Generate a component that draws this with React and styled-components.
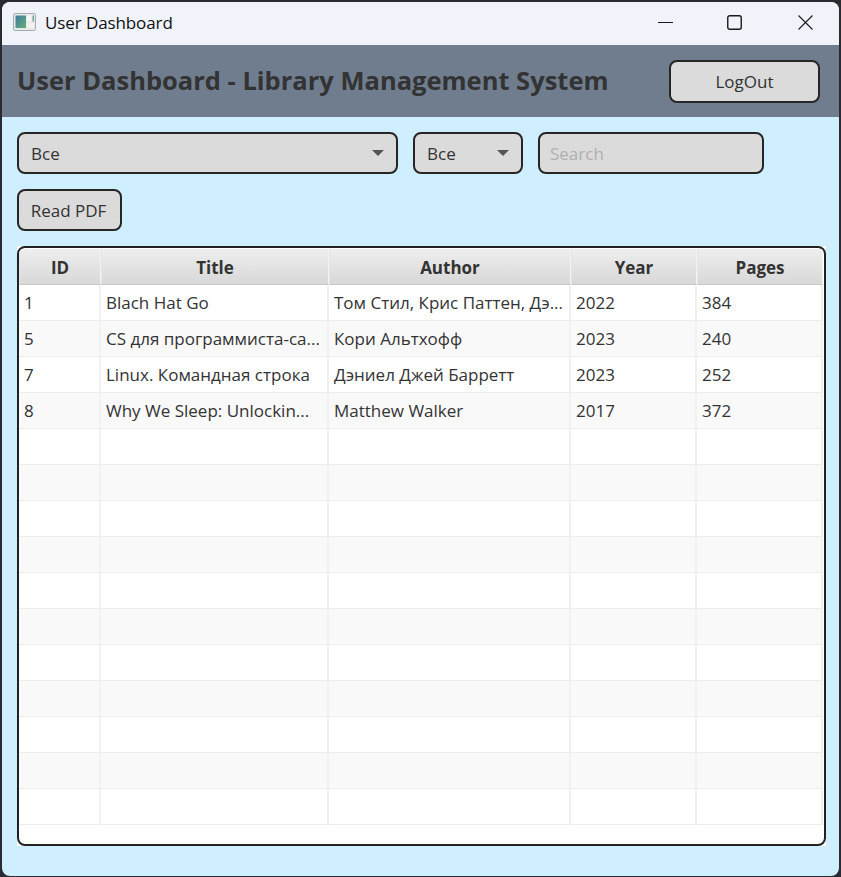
import React from "react";
import styled, { createGlobalStyle } from "styled-components";

const GlobalStyle = createGlobalStyle`
  html, body {
    margin: 0;
    padding: 0;
    background: #2a2b30;
    font-family: "Open Sans", "Noto Sans", sans-serif;
  }
`;

const books = [
  ["1", "Blach Hat Go", "Том Стил, Крис Паттен, Дэ...", "2022", "384"],
  ["5", "CS для программиста-са...", "Кори Альтхофф", "2023", "240"],
  ["7", "Linux. Командная строка", "Дэниел Джей Барретт", "2023", "252"],
  ["8", "Why We Sleep: Unlockin...", "Matthew Walker", "2017", "372"],
];
const columns = ["ID", "Title", "Author", "Year", "Pages"];
const widths = [82, 228, 242, 126, 126];
const EMPTY_ROWS = 11;

export default function App() {
  const blank = Array.from({ length: EMPTY_ROWS }, () => ["", "", "", "", ""]);
  return (
    <>
      <GlobalStyle />
      <Frame>
        <Window>
          <TitleBar>
            <AppIcon viewBox="0 0 23 18">
              <rect x="0.5" y="0.5" width="22" height="17" rx="1.5" fill="#e8eaea" stroke="#a9adb2" />
              <defs>
                <linearGradient id="pane" x1="0" y1="0" x2="1" y2="1">
                  <stop offset="0" stopColor="#3b7c9e" />
                  <stop offset="1" stopColor="#6aae78" />
                </linearGradient>
              </defs>
              <rect x="2.5" y="2.5" width="10.5" height="12.5" fill="url(#pane)" />
              <rect x="14" y="2.5" width="4" height="6" fill="#f7f8f4" />
              <rect x="19.5" y="2.5" width="1.5" height="6" fill="#6aa98e" />
              <rect x="14" y="10" width="7" height="5" fill="#f2f3ee" />
            </AppIcon>
            <WindowTitle>User Dashboard</WindowTitle>
            <Controls>
              <MinimizeIcon viewBox="0 0 15 15">
                <path d="M0 7.5h15" stroke="#1a1a1a" strokeWidth="1" fill="none" />
              </MinimizeIcon>
              <ControlIcon viewBox="0 0 15 15">
                <rect x="0.75" y="0.75" width="13.5" height="13.5" rx="2" stroke="#1a1a1a" strokeWidth="1.4" fill="none" />
              </ControlIcon>
              <ControlIcon viewBox="0 0 15 15">
                <path d="M0.5 0.5l14 14M14.5 0.5l-14 14" stroke="#1a1a1a" strokeWidth="1.1" fill="none" />
              </ControlIcon>
            </Controls>
          </TitleBar>

          <Header>
            <Heading>User Dashboard - Library Management System</Heading>
            <LogOutButton>LogOut</LogOutButton>
          </Header>

          <Body>
            <FilterRow>
              <Combo $width={381}>
                Все
                <Arrow />
              </Combo>
              <Combo $width={110}>
                Все
                <Arrow />
              </Combo>
              <SearchInput placeholder="Search" />
            </FilterRow>
            <ReadButton>Read PDF</ReadButton>

            <TableBox>
              <TableFrame>
                <HeaderRow>
                  {columns.map((name, i) => (
                    <HeaderCell key={name} $width={widths[i]}>
                      {name}
                    </HeaderCell>
                  ))}
                </HeaderRow>
                {[...books, ...blank].map((row, r) => (
                  <Row key={r} $odd={r % 2 === 1}>
                    {row.map((text, i) => (
                      <Cell key={i} $width={widths[i]}>
                        {text}
                      </Cell>
                    ))}
                  </Row>
                ))}
              </TableFrame>
            </TableBox>
          </Body>
        </Window>
      </Frame>
    </>
  );
}

const Frame = styled.div`
  width: 841px;
  height: 877px;
  padding: 2px 2px 1px 2px;
  box-sizing: border-box;
  overflow: hidden;
`;

const Window = styled.div`
  height: 100%;
  border-radius: 8px;
  overflow: hidden;
  display: flex;
  flex-direction: column;
  background: #cfeeff;
`;

const TitleBar = styled.div`
  height: 43px;
  flex: none;
  background: #f0f3fa;
  display: flex;
  align-items: center;
  padding-left: 11px;
`;

const AppIcon = styled.svg`
  width: 23px;
  height: 18px;
  margin-bottom: 3px;
`;

const WindowTitle = styled.span`
  margin-left: 9px;
  margin-bottom: 3px;
  font-size: 17px;
  letter-spacing: -0.1px;
  color: #111;
`;

const Controls = styled.div`
  margin-left: auto;
  margin-right: 26px;
  margin-bottom: 2px;
  display: flex;
  gap: 56px;
`;

const ControlIcon = styled.svg`
  width: 15px;
  height: 15px;
  display: block;
`;

const MinimizeIcon = styled(ControlIcon)`
  margin-right: -2px;
`;

const Header = styled.div`
  height: 72px;
  flex: none;
  background: #6f7d8e;
  display: flex;
  align-items: center;
  justify-content: space-between;
  padding: 0 19px 0 15px;
`;

const Heading = styled.h1`
  margin: 0 0 3px;
  font-size: 25.5px;
  font-weight: 700;
  color: #333333;
  white-space: nowrap;
`;

const Control = styled.div`
  box-sizing: border-box;
  height: 42px;
  background: #dbdbdb;
  border: 2px solid #262626;
  border-radius: 8px;
  font-size: 17px;
  color: #333333;
`;

const LogOutButton = styled(Control)`
  width: 151px;
  height: 43px;
  display: flex;
  align-items: center;
  justify-content: center;
`;

const Body = styled.div`
  flex: 1;
  padding: 15px 15px 0 15px;
`;

const FilterRow = styled.div`
  display: flex;
  gap: 15px;
`;

const Combo = styled(Control)`
  width: ${(p) => p.$width}px;
  display: flex;
  align-items: center;
  justify-content: space-between;
  padding: 0 12px;
`;

const Arrow = styled.span`
  width: 0;
  height: 0;
  border-left: 6.5px solid transparent;
  border-right: 6.5px solid transparent;
  border-top: 6px solid #555555;
`;

const SearchInput = styled.input`
  box-sizing: border-box;
  width: 226px;
  height: 42px;
  background: #dbdbdb;
  border: 2px solid #262626;
  border-radius: 8px;
  padding: 0 10px;
  font: inherit;
  font-size: 17px;
  outline: none;
  &::placeholder {
    color: #b0b0b0;
    opacity: 1;
  }
`;

const ReadButton = styled(Control)`
  width: 105px;
  margin-top: 15px;
  display: flex;
  align-items: center;
  justify-content: center;
  padding-right: 2px;
`;

const TableBox = styled.div`
  width: 809px;
  height: 600px;
  margin-top: 15px;
  background: #ffffff;
`;

const TableFrame = styled.div`
  box-sizing: border-box;
  height: 100%;
  background: #ffffff;
  border: 2px solid #222222;
  border-radius: 8px;
  padding: 1px 2px 0 0;
  overflow: hidden;
`;

const HeaderRow = styled.div`
  display: flex;
  height: 36px;
`;

const HeaderCell = styled.div`
  box-sizing: border-box;
  width: ${(p) => p.$width}px;
  flex: none;
  display: flex;
  align-items: center;
  justify-content: center;
  padding-top: 1px;
  background: linear-gradient(#eeeeee, #d8d8d8);
  border-right: 1px solid #f3f3f3;
  border-left: 1px solid #e4e4e4;
  border-bottom: 1px solid #c8c8c8;
  font-size: 17px;
  font-weight: 700;
  color: #333333;
`;

const Row = styled.div`
  display: flex;
  height: 36px;
  background: ${(p) => (p.$odd ? "#f9f9f9" : "#ffffff")};
`;

const Cell = styled.div`
  box-sizing: border-box;
  width: ${(p) => p.$width}px;
  flex: none;
  display: flex;
  align-items: center;
  padding-left: 5px;
  border-right: 2px solid #f1f1f1;
  border-bottom: 1px solid #ededed;
  font-size: 17px;
  color: #333333;
  white-space: nowrap;
  overflow: hidden;
`;
